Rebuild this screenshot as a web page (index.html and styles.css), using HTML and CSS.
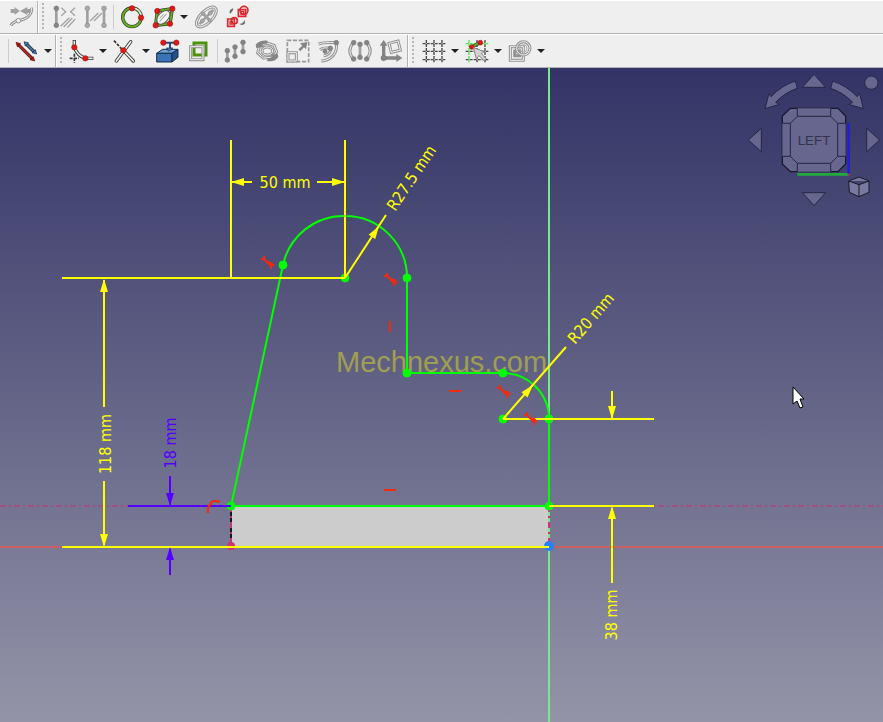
FILE: index.html
```html
<!DOCTYPE html>
<html lang="en">
<head>
<meta charset="utf-8">
<title>Sketcher</title>
<link rel="stylesheet" href="styles.css">
</head>
<body>
<header class="toolbars">
  <div class="toolbar-row" role="toolbar" aria-label="Sketcher constraints">
    <div class="group first">
      <button class="tool" aria-label="Join curves"><svg viewBox="0 0 72 72"><path class="fill-gray" d="M5 12h12V6l15 12-15 12v-6H5zM67 12H55V6L33 18l22 12v-6h12z"/><path class="rim" d="M68 8C70 30 52 43 28 47Q14 49 5 61"/><path class="core" d="M68 8C70 30 52 43 28 47Q14 49 5 61"/><circle class="node-light" cx="28" cy="47" r="7"/></svg></button>
    </div>
    <div class="group">
      <span class="handle"></span>
      <button class="tool" aria-label="Activate constraint"><svg viewBox="0 0 72 72"><path class="bar" d="M13 11V60"/><circle class="node" cx="13" cy="10" r="7"/><circle class="node" cx="13" cy="61" r="7"/><path class="hatch" d="M28 8l13 12-13 12M69 8L56 20l13 12M26 64l26-26M35 66l26-27M46 68l24-26"/></svg></button>
      <button class="tool" aria-label="Toggle driving constraint"><svg viewBox="0 0 72 72"><path class="bar" d="M13 11V60M63 11V60"/><circle class="node-mid" cx="13" cy="10" r="7"/><circle class="node-mid" cx="13" cy="61" r="7"/><circle class="node-mid" cx="63" cy="10" r="7"/><circle class="node-mid" cx="63" cy="61" r="7"/><path class="hatch" d="M21 48l25-24M33 48l24-24"/></svg></button>
      <span class="divider"></span>
      <button class="tool" aria-label="Degrees of freedom"><svg viewBox="0 0 72 72"><circle class="ink" cx="36" cy="37" r="28"/><circle class="green-line" cx="36" cy="37" r="28"/><path class="core wide" d="M40 9A28 28 0 0 1 64 34"/><circle class="red-node" cx="36" cy="10" r="8"/><circle class="red-node" cx="63" cy="38" r="8"/></svg></button>
      <button class="tool" aria-label="Internal geometry"><svg viewBox="0 0 72 72"><path class="ink" d="M19 18L64 11 57 56 14 61z"/><path class="green-line" d="M19 18L64 11 57 56 14 61z"/><g transform="rotate(-48 37 37)"><ellipse class="paper" cx="37" cy="37" rx="24" ry="15"/><path class="thin" d="M20 37h32M27 31h18"/></g><circle class="red-node" cx="19" cy="18" r="8"/><circle class="red-node" cx="64" cy="11" r="8"/><circle class="red-node" cx="57" cy="56" r="8"/><circle class="red-node" cx="14" cy="61" r="8"/></svg></button>
      <button class="drop" aria-label="Internal geometry options"></button>
      <button class="tool" aria-label="Show internal alignment"><svg viewBox="0 0 72 72"><g transform="rotate(-45 37 36)"><ellipse class="rim" cx="37" cy="36" rx="38" ry="18"/><ellipse class="core" cx="37" cy="36" rx="38" ry="18"/><path class="bar" d="M7 36h60M37 22v28"/><circle class="node-mid" cx="20" cy="36" r="6"/><circle class="node-mid" cx="54" cy="36" r="6"/><circle class="node-mid" cx="37" cy="22" r="5"/><circle class="node-mid" cx="37" cy="50" r="5"/></g></svg></button>
      <button class="tool" aria-label="Switch virtual space"><svg viewBox="0 0 72 72"><path class="red-thick" d="M40 14h22v20H40zM8 42h20v22H8z"/><circle class="red-thick" cx="57" cy="16" r="12"/><circle class="red-thick" cx="28" cy="47" r="9"/><path class="red-mid" d="M48 20h8v8h-8zM15 49h7v8h-7z"/><path class="charcoal" d="M14 25q-2-12 11-15l-2 8q-3 0-5 7zM59 45q4 13-8 15l-8-3 9-2q3-3 7-10z"/></svg></button>
    </div>
  </div>
  <div class="toolbar-row" role="toolbar" aria-label="Sketcher geometry">
    <div class="group first">
      <span class="divider"></span>
      <button class="tool" aria-label="Dimension"><svg viewBox="0 0 72 72"><path class="ink" d="M10 17l42 42"/><path class="red-line" d="M10 17l42 42"/><path class="red-fill" d="M3 10l14 4-10 9zM59 66l-14-4 10-9z"/><path class="ink" d="M34 15l24 24"/><path class="blue-line" d="M34 15l24 24"/><path class="blue-fill" d="M27 8l14 4-10 9zM65 45l-14-4 10-9z"/></svg></button>
      <button class="drop" aria-label="Dimension options"></button>
    </div>
    <div class="group">
      <span class="handle"></span>
      <button class="tool" aria-label="Fillet"><svg viewBox="0 0 72 72"><path class="ink" d="M13 3V25Q22 50 46 58H70"/><path class="core wide" d="M13 5V25Q22 50 46 58H68"/><path class="ink-dash" d="M13 44v28M-1 58h28"/><circle class="red-node" cx="13" cy="25" r="8"/><circle class="red-node" cx="46" cy="58" r="8"/></svg></button>
      <button class="drop" aria-label="Fillet options"></button>
      <button class="tool" aria-label="Trim edge"><svg viewBox="0 0 72 72"><path class="ink round" d="M53 8L10 66M31 34L61 66"/><path class="core wide round" d="M53 8L10 66M31 34L61 66"/><path class="ink-dash" d="M3 5L28 32"/><circle class="red-node" cx="31" cy="34" r="8"/></svg></button>
      <button class="drop" aria-label="Trim options"></button>
      <button class="tool" aria-label="External geometry"><svg viewBox="0 0 72 72"><path class="box-top" d="M2 43L20 31H66L48 43z"/><path class="box-front" d="M2 43H48V69H2z"/><path class="box-side" d="M48 43L66 31V55L48 69z"/><path class="navy" d="M24 11H60M42 11V32"/><path class="blue-fill" d="M31 27h20L38 37z"/><circle class="red-node" cx="22" cy="11" r="8"/><circle class="red-node" cx="61" cy="11" r="8"/></svg></button>
      <button class="tool" aria-label="Carbon copy"><svg viewBox="0 0 72 72"><path class="green-thick" d="M21 12H57V48H21z"/><path class="rim" d="M11 23H48V62H11z"/><path class="core" d="M11 23H48V62H11z"/></svg></button>
      <span class="divider"></span>
      <button class="tool" aria-label="Translate"><svg viewBox="0 0 72 72"><path class="bar" d="M10 35V63M33 22V50M57 10V38"/><circle class="node" cx="10" cy="35" r="7"/><circle class="node" cx="10" cy="63" r="7"/><circle class="node" cx="33" cy="24" r="7"/><circle class="node" cx="33" cy="52" r="7"/><circle class="node" cx="57" cy="10" r="7"/><circle class="node" cx="57" cy="38" r="7"/></svg></button>
      <button class="tool" aria-label="Rotate"><svg viewBox="0 0 72 72"><path class="rim" d="M34 12L57 19 65 39 50 55 25 57 8 42 13 22z"/><path class="core" d="M34 12L57 19 65 39 50 55 25 57 8 42 13 22z"/><ellipse class="rim" cx="37" cy="36" rx="16" ry="12"/><ellipse class="core" cx="37" cy="36" rx="16" ry="12"/><path class="fill-dark" d="M2 17Q15 2 38 5l-2 9q-10-1-15 5l6 5-23 3zM70 54Q60 70 36 66l2-9q10 2 14-5l-6-4 22-4z"/></svg></button>
      <button class="tool" aria-label="Scale"><svg viewBox="0 0 72 72"><path class="rim-dash" d="M4 4H68V68H4z"/><path class="rim" d="M6 41H31V66H6z"/><path class="core" d="M6 41H31V66H6z"/><path class="fill-dark" d="M37 31l12-11-7-7 22-4-4 22-6-6-11 12z"/></svg></button>
      <button class="tool" aria-label="Offset"><svg viewBox="0 0 72 72"><path class="rim" d="M5 15Q20 9 58 11C63 42 43 64 13 66M9 32C20 24 30 27 40 28 42 42 32 49 20 50"/><path class="core" d="M5 15Q20 9 58 11C63 42 43 64 13 66M9 32C20 24 30 27 40 28 42 42 32 49 20 50"/><circle class="node" cx="58" cy="11" r="7"/><circle class="node" cx="40" cy="28" r="7"/><circle class="node" cx="24" cy="37" r="6"/></svg></button>
      <button class="tool" aria-label="Symmetry"><svg viewBox="0 0 72 72"><path class="rim" d="M16 11Q-5 35 16 60M56 11Q77 35 56 60"/><path class="core" d="M16 11Q-5 35 16 60M56 11Q77 35 56 60"/><path class="bar" d="M36 14V58"/><circle class="node" cx="17" cy="11" r="7"/><circle class="node" cx="17" cy="60" r="7"/><circle class="node" cx="36" cy="16" r="7"/><circle class="node" cx="36" cy="55" r="7"/><circle class="node" cx="56" cy="11" r="7"/><circle class="node" cx="56" cy="60" r="7"/></svg></button>
      <button class="tool" aria-label="Remove axes alignment"><svg viewBox="0 0 72 72"><path class="fill-dark" d="M9 52V20H2L14 3 26 20H19V52H52V45L70 57 52 69V62H14Q9 62 9 57z"/><circle class="node" cx="14" cy="57" r="8"/><g transform="rotate(-14 47 23)"><path class="rim" d="M33 9H61V37H33z"/><path class="core" d="M33 9H61V37H33z"/></g></svg></button>
    </div>
    <div class="group">
      <span class="handle"></span>
      <button class="tool" aria-label="Toggle grid"><svg viewBox="0 0 72 72"><path class="grid" d="M13 3V70M36 3V70M60 3V70M2 14H70M2 37H70M2 62H70"/></svg></button>
      <button class="drop" aria-label="Grid options"></button>
      <button class="tool" aria-label="Toggle snap"><svg viewBox="0 0 72 72"><path class="grid" d="M36 3V70M60 3V70M2 37H70M2 62H70"/><path class="grid-green" d="M12 3V70M2 14H70"/><path class="ink" d="M20 24L45 11"/><path class="green-line" d="M20 24L45 11"/><circle class="red-node" cx="20" cy="24" r="7"/><circle class="red-node" cx="46" cy="11" r="7"/><path class="pointer" d="M25 26L58 38 49 44 63 59 57 65 42 50 34 59z"/></svg></button>
      <button class="drop" aria-label="Snap options"></button>
      <button class="tool" aria-label="Rendering order"><svg viewBox="0 0 72 72"><path class="rim" d="M7 23H46V64H7z"/><path class="core" d="M7 23H46V64H7z"/><path class="rim" d="M20 36H35V50H20z"/><circle class="rim" cx="46" cy="28" r="20"/><circle class="core" cx="46" cy="28" r="20"/><circle class="thin" cx="46" cy="28" r="11"/></svg></button>
      <button class="drop" aria-label="Rendering options"></button>
    </div>
  </div>
</header>
<main class="viewport">
  <svg class="sketch" role="img" aria-label="Sketch with dimensions">
    <defs>
      <path id="head" d="M0 0L4 13H-4z"/>
      <path id="tangent" d="M-6-3L-3-3 4 4 4 7M-3-6L-3-3M0 0L4 1 7 4"/>
    </defs>
    <g transform="translate(0 -68)">
      <text class="watermark" x="336" y="372">Mechnexus.com</text>
      <path class="face" d="M231 506H549V547H231z"/>
      <line class="axis-x" x1="0" x2="100%" y1="547" y2="547"/>
      <line class="axis-y" x1="549" x2="549" y1="68" y2="200%"/>
      <line class="external" x1="0" x2="100%" y1="506" y2="506"/>
      <path class="edge-dark" d="M231 506V547"/>
      <path class="edge-pink" d="M231 506V547M549 506V547"/>
      <path class="geometry" d="M231 506L283 265A62 62 0 0 1 345 216A62 62 0 0 1 407 278V373H503A46 46 0 0 1 549 419V506z"/>
      <g class="points">
        <circle cx="283" cy="265" r="4"/><circle cx="345" cy="278" r="4"/><circle cx="407" cy="278" r="4"/>
        <circle cx="407" cy="373" r="4"/><circle cx="503" cy="373" r="4"/><circle cx="503" cy="419" r="4"/>
        <circle cx="549" cy="419" r="4"/><circle cx="549" cy="506" r="4"/><circle cx="231" cy="506" r="4"/>
      </g>
      <circle class="point-pink" cx="231" cy="546" r="4"/>
      <circle class="point-blue" cx="549" cy="546" r="5"/>
      <path class="dimension" d="M231 140V278M345 140V278M62 278H345M62 547H549M231 182H252M317 182H344M104 280V407M104 481V545M345 278L386 215M503 419L566 347M503 419H654M549 506H654M612 391V418M612 508V583"/>
      <g class="heads">
        <use href="#head" transform="translate(231 182) rotate(-90)"/>
        <use href="#head" transform="translate(345 182) rotate(90)"/>
        <use href="#head" transform="translate(104 279)"/>
        <use href="#head" transform="translate(104 547) rotate(180)"/>
        <use href="#head" transform="translate(379 226) rotate(33)"/>
        <use href="#head" transform="translate(533 385) rotate(41)"/>
        <use href="#head" transform="translate(612 419) rotate(180)"/>
        <use href="#head" transform="translate(612 506)"/>
      </g>
      <path class="reference" d="M128 506H231M170 476V505M170 549V575"/>
      <g class="reference-heads">
        <use href="#head" transform="translate(170 506) rotate(180)"/>
        <use href="#head" transform="translate(170 547)"/>
      </g>
      <g class="constraints">
        <use href="#tangent" x="267" y="262"/><use href="#tangent" x="390" y="279"/>
        <use href="#tangent" x="503" y="391"/><use href="#tangent" x="530" y="418"/>
        <path d="M390 321V332M449 391H461M384 490H396M208 513Q207 505 212 504M210 505Q211 499 220 502"/>
      </g>
      <g class="labels">
        <text x="285" y="188">50 mm</text>
        <text transform="translate(416 181) rotate(-56)">R27.5 mm</text>
        <text transform="translate(595 322) rotate(-49)">R20 mm</text>
        <text transform="translate(111 444) rotate(-90)">118 mm</text>
        <text transform="translate(617 615) rotate(-90)">38 mm</text>
        <text class="label-reference" transform="translate(176 443) rotate(-90)">18 mm</text>
      </g>
      <path class="cursor" d="M793 387V404L797 401 800 408 803 407 800 399H804z"/>
    </g>
  </svg>
  <svg class="navigation" viewBox="0 9 429 441" role="img" aria-label="Navigation cube">
    <g class="nav-shape">
      <path d="M222 28L257 67H187zM222 422L187 383H257zM25 225L64 190V260zM419 225L380 190V260z"/>
      <path d="M166 48L172 70Q135 82 107 112L119 118 75 131 87 85 93 95Q124 62 166 48zM278 48L272 70Q309 82 338 112L326 118 370 131 359 85 352 95Q320 62 278 48z"/>
      <circle cx="394" cy="53" r="20"/>
      <path class="cube-edge" d="M151 130H294L317 153V297L294 320H151L127 297V153z"/>
      <path d="M172 130V154H272V130M317 175H293V274H317M272 320V295H172V320M127 274H151V175H127M172 154L151 175M272 154L293 175M293 274L272 295M151 274L172 295"/>
      <path class="mini-cube" d="M326 348L357 336 387 348V382L357 395 328 382zM326 348L357 359 387 348M357 359V395"/>
    </g>
    <path class="nav-y" d="M172 328H324"/>
    <path class="nav-z" d="M326 175V326"/>
    <path class="nav-origin" d="M323 329H329"/>
    <text class="nav-text" x="222" y="239">LEFT</text>
  </svg>
</main>
</body>
</html>
```
FILE: styles.css
```css
* { box-sizing: border-box; }
body {
  margin: 0;
  min-height: 100vh;
  display: flex;
  flex-direction: column;
  font-family: "Liberation Sans", sans-serif;
}

/* Toolbars */
.toolbars { background: #efefef; }
.toolbar-row {
  display: flex;
  height: 34px;
  border-top: 1px solid #fff;
  border-bottom: 1px solid #b2b2b2;
}
.group {
  display: flex;
  align-items: center;
  padding-right: 1px;
  border-left: 1px solid #b2b2b2;
  box-shadow: inset 1px 0 #fff;
}
.group.first { padding-left: 5px; border-left: 0; box-shadow: none; }
.handle {
  width: 3px;
  height: 28px;
  margin: 0 3px 0 4px;
  background: radial-gradient(circle at 1px 1px, #b5b5b5 1px, transparent 1px) 0 0 / 3px 4px;
}
.divider {
  width: 6px;
  height: 24px;
  background: linear-gradient(#ccc, #ccc) 3px 0 / 1px 100% no-repeat;
}
.tool, .drop {
  display: flex;
  align-items: center;
  justify-content: center;
  padding: 0;
  border: 0;
  background: none;
}
.tool { width: 31px; height: 32px; }
.tool svg { width: 24px; height: 24px; overflow: visible; }
.drop { width: 12px; height: 32px; }
.drop::before {
  content: "";
  border: 4px solid transparent;
  border-top-color: #222;
  border-bottom: 0;
}

/* Icon parts */
.tool path, .tool circle, .tool ellipse { fill: none; }
.tool .rim { stroke: #929292; stroke-width: 9; }
.tool .rim-dash { stroke: #999; stroke-width: 5; stroke-dasharray: 12 5; }
.tool .core { stroke: #f2f2f2; stroke-width: 3; }
.tool .wide { stroke-width: 5; }
.tool .round { stroke-linecap: round; }
.tool .bar { stroke: #a0a0a0; stroke-width: 8; }
.tool .hatch { stroke: #a2a2a2; stroke-width: 4; }
.tool .node { fill: #858585; stroke: #777; stroke-width: 2; }
.tool .node-mid { fill: #aaa; stroke: #8c8c8c; stroke-width: 2; }
.tool .node-light { fill: #eee; stroke: #999; stroke-width: 3; }
.tool .fill-gray { fill: #a0a0a0; }
.tool .fill-dark { fill: #858585; }
.tool .charcoal { fill: #606666; }
.tool .ink { stroke: #30382c; stroke-width: 10; }
.tool .ink-dash { stroke: #333; stroke-width: 5; stroke-dasharray: 9 4; }
.tool .green-line { stroke: #66b020; stroke-width: 6; }
.tool .green-thick { stroke: #4d920c; stroke-width: 9; }
.tool .red-line { stroke: #d01818; stroke-width: 5; }
.tool .red-thick { stroke: #db2730; stroke-width: 5; }
.tool .red-mid { stroke: #db2730; stroke-width: 4; }
.tool .red-fill { fill: #bd1010; stroke: #501010; stroke-width: 2; }
.tool .red-node { fill: #e11818; stroke: #a51212; stroke-width: 2; }
.tool .blue-line { stroke: #4878b0; stroke-width: 5; }
.tool .blue-fill { fill: #4573aa; stroke: #17304f; stroke-width: 2; }
.tool .navy { stroke: #244d79; stroke-width: 6; }
.tool .box-top { fill: #70a1d3; stroke: #152d4b; stroke-width: 3; }
.tool .box-front { fill: #3972b5; stroke: #152d4b; stroke-width: 3; }
.tool .box-side { fill: #24518c; stroke: #152d4b; stroke-width: 3; }
.tool .paper { fill: #f4f4f4; stroke: #555; stroke-width: 3; }
.tool .thin { stroke: #aaa; stroke-width: 3; }
.tool .grid { stroke: #484848; stroke-width: 4; stroke-dasharray: 9 3; }
.tool .grid-green { stroke: #45ef45; stroke-width: 4; stroke-dasharray: 9 3; }
.tool .pointer { fill: #d4d4ce; stroke: #888; stroke-width: 3; }

/* 3D view */
.viewport {
  position: relative;
  flex: 1;
  display: flex;
  min-height: 600px;
  overflow: hidden;
  background: linear-gradient(#333366, #9494a8);
}
.sketch { flex: 1; min-width: 0; }
.sketch path, .sketch line { fill: none; }
.sketch .face { fill: #ccc; }
.watermark { font-size: 29px; fill: #a09e50; }
.axis-x { stroke: #c8605f; stroke-width: 2; }
.axis-y { stroke: #7be78d; stroke-width: 2; }
.external { stroke: #c72e70; stroke-width: 1; stroke-dasharray: 6 3 2 3; }
.edge-dark { stroke: #181818; stroke-width: 2; }
.edge-pink { stroke: #cb3471; stroke-width: 2; stroke-dasharray: 6 4 2 4; }
.geometry { stroke: #0f0; stroke-width: 2; }
.points { fill: #0f0; stroke: #0f0; }
.point-pink { fill: #cb3471; }
.point-blue { fill: #2a7fff; }
.dimension { stroke: #ff0; stroke-width: 2; }
.heads { fill: #ff0; }
.reference { stroke: #50f; stroke-width: 2; }
.constraints, .constraints path { stroke: #f42a0a; stroke-width: 2; }
.labels {
  fill: #ff0;
  font-family: "DejaVu Sans Condensed", "Open Sans", sans-serif;
  font-size: 16px;
  text-anchor: middle;
}
.label-reference { fill: #50f; }
.sketch #head { fill: inherit; }
.reference-heads { fill: #50f; }
.sketch .cursor { fill: #fff; stroke: #000; }

/* Navigation cube */
.navigation { position: absolute; top: 0; right: 0; width: 143px; height: 147px; }
.nav-shape { fill: #66668f; stroke: #252544; stroke-width: 3; }
.nav-shape .cube-edge { stroke: #18182c; stroke-width: 4; }
.nav-shape .mini-cube { fill: #7878a0; stroke: #181828; }
.nav-y { stroke: #20ac3c; stroke-width: 8; }
.nav-z { stroke: #2222c8; stroke-width: 8; }
.nav-origin { stroke: #c33a3a; stroke-width: 5; }
.nav-text { fill: #33334b; font-size: 40px; text-anchor: middle; }
```
